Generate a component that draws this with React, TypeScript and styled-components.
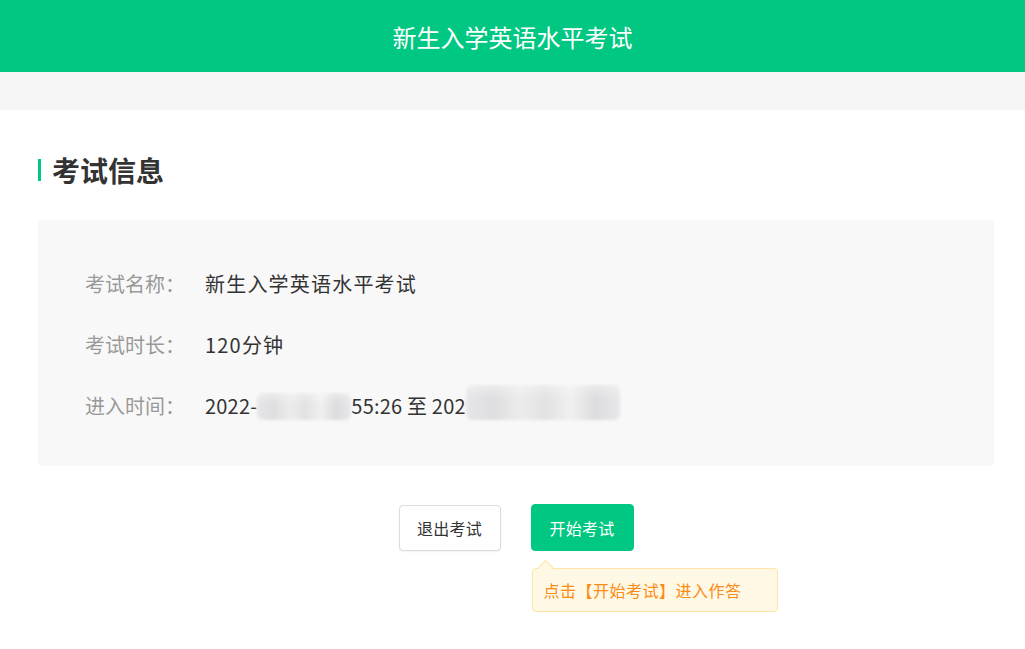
import React from "react";
import styled, { createGlobalStyle } from "styled-components";

const GlobalStyle = createGlobalStyle`
  html, body { margin: 0; padding: 0; background: #ffffff; }
  body { font-family: "Noto Sans CJK SC", "Noto Sans", sans-serif; }
  * { box-sizing: border-box; }
`;

const Page = styled.div`
  width: 1025px;
  min-height: 649px;
  background: #fff;
`;

const Header = styled.header`
  height: 72px;
  background: #00c781;
  display: flex;
  align-items: center;
  justify-content: center;
  color: #fff;
  font-size: 24px;
  letter-spacing: 0;
  font-weight: 400;
`;

const Band = styled.div`
  height: 38px;
  background: #f5f5f5;
`;

const Main = styled.main`
  padding: 45px 31px 0 38px;
  display: flex;
  flex-direction: column;
`;

const SectionTitle = styled.h2`
  margin: 0;
  display: flex;
  align-items: center;
  gap: 11px;
  height: 30px;
  font-size: 28px;
  font-weight: 700;
  color: #333;
  &::before {
    content: "";
    width: 3px;
    height: 22px;
    background: #00c781;
  }
`;

const Card = styled.section`
  margin-top: 35px;
  background: #f8f8f8;
  border-radius: 4px;
  padding: 48px 47px 46px;
  display: flex;
  flex-direction: column;
  gap: 31px;
`;

const Row = styled.div`
  display: flex;
  align-items: center;
  height: 30px;
  font-size: 20px;
  white-space: nowrap;
`;

const Label = styled.span`
  width: 120px;
  color: #999;
`;

const Value = styled.span<{ $tight?: boolean }>`
  color: #333;
  display: flex;
  align-items: center;
  letter-spacing: ${(p) => (p.$tight ? 0.2 : 1.2)}px;
`;

const Blur = styled.span<{ $w: number; $h: number; $tall?: boolean }>`
  display: inline-block;
  width: ${(p) => p.$w}px;
  height: ${(p) => p.$h}px;
  margin-top: ${(p) => (p.$tall ? -6 : 2)}px;
  background:
    linear-gradient(180deg, rgba(255,255,255,0.35) 0%, rgba(255,255,255,0) 40%),
    linear-gradient(90deg, #e6e6e8 0%, #dedee0 18%, #ececed 35%, #e2e2e4 52%, #f0f0f1 68%, #dcdcde 84%, #e8e8ea 100%);
  filter: blur(1.5px);
  border-radius: 6px;
`;

const Actions = styled.div`
  margin-top: 39px;
  display: flex;
  justify-content: center;
  gap: 30px;
`;

const Button = styled.button<{ $primary?: boolean }>`
  width: ${(p) => (p.$primary ? 103 : 102)}px;
  height: ${(p) => (p.$primary ? 47 : 46)}px;
  margin-top: ${(p) => (p.$primary ? -1 : 0)}px;
  border-radius: 4px;
  font-family: inherit;
  font-size: 16px;
  letter-spacing: 0.3px;
  cursor: pointer;
  border: 1px solid ${(p) => (p.$primary ? "#00c781" : "#dcdcdc")};
  background: ${(p) => (p.$primary ? "#00c781" : "#fff")};
  color: ${(p) => (p.$primary ? "#fff" : "#333")};
  box-shadow: ${(p) => (p.$primary ? "none" : "0 1px 2px rgba(0,0,0,0.06)")};
`;

const StartWrap = styled.div`
  position: relative;
`;

const Tip = styled.div`
  position: absolute;
  left: 1px;
  top: 63px;
  width: 246px;
  height: 44px;
  background: #fff8e5;
  border: 1px solid #ffe6a3;
  border-radius: 4px;
  color: #fa8c16;
  font-size: 16px;
  letter-spacing: 0.5px;
  display: flex;
  align-items: center;
  padding-left: 11px;
  white-space: nowrap;
  &::before {
    content: "";
    position: absolute;
    left: 7px;
    top: -7px;
    width: 10px;
    height: 10px;
    background: #fff8e5;
    border-left: 1px solid #ffe6a3;
    border-top: 1px solid #ffe6a3;
    transform: rotate(45deg);
  }
`;

export default function App() {
  return (
    <Page>
      <GlobalStyle />
      <Header>新生入学英语水平考试</Header>
      <Band />
      <Main>
        <SectionTitle>考试信息</SectionTitle>
        <Card>
          <Row>
            <Label>考试名称：</Label>
            <Value>新生入学英语水平考试</Value>
          </Row>
          <Row>
            <Label>考试时长：</Label>
            <Value>120分钟</Value>
          </Row>
          <Row>
            <Label>进入时间：</Label>
            <Value $tight>
              2022-
              <Blur $w={94} $h={27} />
              55:26 至 202
              <Blur $w={154} $h={35} $tall />
            </Value>
          </Row>
        </Card>
        <Actions>
          <Button>退出考试</Button>
          <StartWrap>
            <Button $primary>开始考试</Button>
            <Tip>点击【开始考试】进入作答</Tip>
          </StartWrap>
        </Actions>
      </Main>
    </Page>
  );
}
